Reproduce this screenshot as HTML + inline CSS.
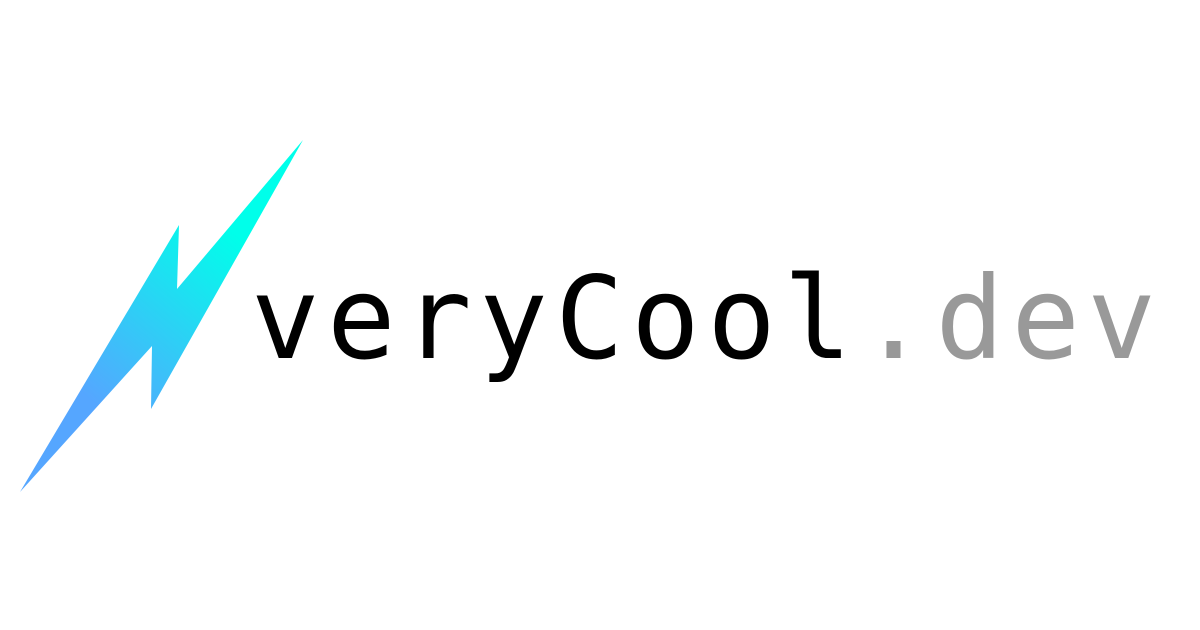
<!DOCTYPE html>
<html><head><style>
html,body{margin:0;padding:0;background:#fff;width:1200px;height:630px;overflow:hidden;position:relative}
.t{position:absolute;left:251px;top:0;line-height:1;font-family:"DejaVu Sans Mono","Liberation Mono",monospace;font-size:114px;letter-spacing:7.4px;color:#000;white-space:nowrap;-webkit-text-stroke:0}
.g{color:#999}
</style></head><body>
<svg width="1200" height="630" style="position:absolute;left:0;top:0">
<defs><linearGradient id="b" x1="230" y1="230" x2="90" y2="400" gradientUnits="userSpaceOnUse">
<stop offset="0" stop-color="#00ffea"/><stop offset="1" stop-color="#55a6ff"/></linearGradient></defs>
<path d="M303,140 L151,409 L152,346 L20,492 L179,225 L177,289 Z" fill="url(#b)"/>
</svg>
<div class="t" style="top:262px">veryCool<span class="g">.dev</span></div>
</body></html>
